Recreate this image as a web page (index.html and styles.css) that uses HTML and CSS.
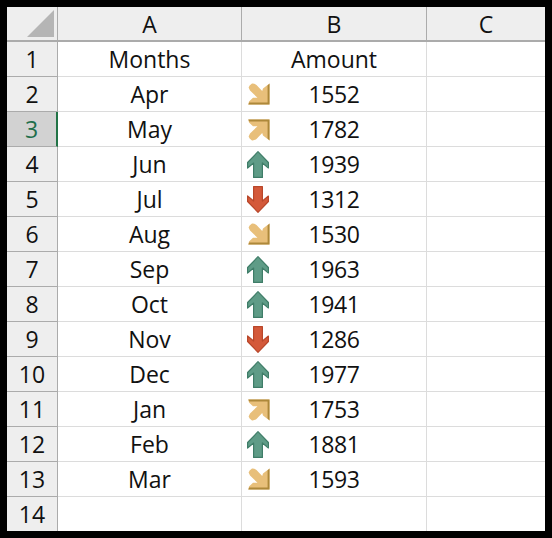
FILE: index.html
```html
<!DOCTYPE html>
<html lang="en">
<head>
<meta charset="utf-8">
<title>Sheet</title>
<link rel="stylesheet" href="styles.css">
</head>
<body>
<svg class="defs" width="0" height="0" aria-hidden="true">
  <symbol id="up" viewBox="0 0 22 27"><path d="M11 .7 L21.4 11.5 V17 L15.4 12 V26.4 H6.6 V12 L.6 17 V11.5 Z" fill="#5f9c87" stroke="#3f7d68" stroke-width="1.2" stroke-linejoin="round"/></symbol>
  <symbol id="down" viewBox="0 0 22 27"><path d="M11 26.3 L21.4 15.5 V10 L15.4 15 V.6 H6.6 V15 L.6 10 V15.5 Z" fill="#d4593a" stroke="#b9472a" stroke-width="1.2" stroke-linejoin="round"/></symbol>
  <symbol id="se" viewBox="0 0 22 22"><path d="M.6 4.5 Q1 2.5 4 .6 Q6.5 .4 8.5 2 L14.2 8 L15 5.5 L21.5 .6 V21.5 H.3 L1 18.5 L5 14.8 H9.5 L2 7.5 Z" fill="#e8bf7a"/><path d="M21.5 .6 V21.5 H.3 L1.2 19.6 H19.6 V2.4 Z" fill="#ad883a"/></symbol>
  <symbol id="ne" viewBox="0 0 22 22"><path d="M.6 17.5 Q1 19.5 4 21.4 Q6.5 21.6 8.5 20 L14.2 14 L15 16.5 L21.5 21.4 V.5 H.3 L1 3.5 L5 7.2 H9.5 L2 14.5 Z" fill="#e8bf7a"/><path d="M21.5 21.4 V.5 H.3 L1.2 2.4 H19.6 V19.6 Z" fill="#ad883a"/></symbol>
</svg>
<main class="sheet">
  <div class="corner"><span class="tri"></span></div><div class="ch">A</div><div class="ch">B</div><div class="ch last">C</div>

  <div class="rh">1</div><div class="c">Months</div><div class="c">Amount</div><div class="c last"></div>
  <div class="rh">2</div><div class="c">Apr</div><div class="c"><svg class="ic diag"><use href="#se"/></svg><span class="n">1552</span></div><div class="c last"></div>
  <div class="rh sel">3</div><div class="c">May</div><div class="c"><svg class="ic diag up-right"><use href="#ne"/></svg><span class="n">1782</span></div><div class="c last"></div>
  <div class="rh">4</div><div class="c">Jun</div><div class="c"><svg class="ic vert"><use href="#up"/></svg><span class="n">1939</span></div><div class="c last"></div>
  <div class="rh">5</div><div class="c">Jul</div><div class="c"><svg class="ic vert"><use href="#down"/></svg><span class="n">1312</span></div><div class="c last"></div>
  <div class="rh">6</div><div class="c">Aug</div><div class="c"><svg class="ic diag"><use href="#se"/></svg><span class="n">1530</span></div><div class="c last"></div>
  <div class="rh">7</div><div class="c">Sep</div><div class="c"><svg class="ic vert"><use href="#up"/></svg><span class="n">1963</span></div><div class="c last"></div>
  <div class="rh">8</div><div class="c">Oct</div><div class="c"><svg class="ic vert"><use href="#up"/></svg><span class="n">1941</span></div><div class="c last"></div>
  <div class="rh">9</div><div class="c">Nov</div><div class="c"><svg class="ic vert"><use href="#down"/></svg><span class="n">1286</span></div><div class="c last"></div>
  <div class="rh">10</div><div class="c">Dec</div><div class="c"><svg class="ic vert"><use href="#up"/></svg><span class="n">1977</span></div><div class="c last"></div>
  <div class="rh">11</div><div class="c">Jan</div><div class="c"><svg class="ic diag up-right"><use href="#ne"/></svg><span class="n">1753</span></div><div class="c last"></div>
  <div class="rh">12</div><div class="c">Feb</div><div class="c"><svg class="ic vert"><use href="#up"/></svg><span class="n">1881</span></div><div class="c last"></div>
  <div class="rh">13</div><div class="c">Mar</div><div class="c"><svg class="ic diag"><use href="#se"/></svg><span class="n">1593</span></div><div class="c last"></div>
  <div class="rh end">14</div><div class="c end"></div><div class="c end"></div><div class="c last end"></div>
</main>
</body>
</html>
```
FILE: styles.css
```css
html, body { margin: 0; height: 100%; background: #000; }
body { padding: 7px; box-sizing: border-box; overflow: hidden; }
.defs { position: absolute; }
.sheet {
  width: 538px;
  height: 524px;
  background: #fff;
  display: grid;
  grid-template-columns: 51px 184px 185px 118px;
  grid-template-rows: 35px repeat(13, 35px) 34px;
  font-family: "Open Sans", "Noto Sans", sans-serif;
  font-size: 23px;
  color: #111;
  overflow: hidden;
}
.corner, .ch, .rh, .c {
  box-sizing: border-box;
  display: flex;
  align-items: center;
  justify-content: center;
  position: relative;
}
.corner { background: #eeeeee; border-right: 1px solid #ababab; border-bottom: 2px solid #ababab; }
.tri {
  width: 27px; height: 27px;
  background: #b5b5b5;
  clip-path: polygon(100% 0, 100% 100%, 0 100%);
  position: absolute; right: 3px; bottom: 3px;
}
.ch { background: #eeeeee; border-right: 1px solid #ababab; border-bottom: 2px solid #ababab; }
.ch.last { border-right: 0; }
.rh { background: #eeeeee; border-right: 1px solid #ababab; border-bottom: 1px solid #ababab; }
.rh.sel { background: #d2d2d2; color: #1f6f4c; border-right: 2px solid #217346; }
.rh.end, .c.end { border-bottom: 0; }
.c { border-right: 1px solid #dcdcdc; border-bottom: 1px solid #dcdcdc; }
.c.last { border-right: 0; }
.n { letter-spacing: -0.4px; }
.ic { position: absolute; }
.diag { left: 6px; top: 6px; width: 22px; height: 22px; }
.diag.up-right { top: 7px; }
.vert { left: 5px; top: 4px; width: 22px; height: 27px; }
```
